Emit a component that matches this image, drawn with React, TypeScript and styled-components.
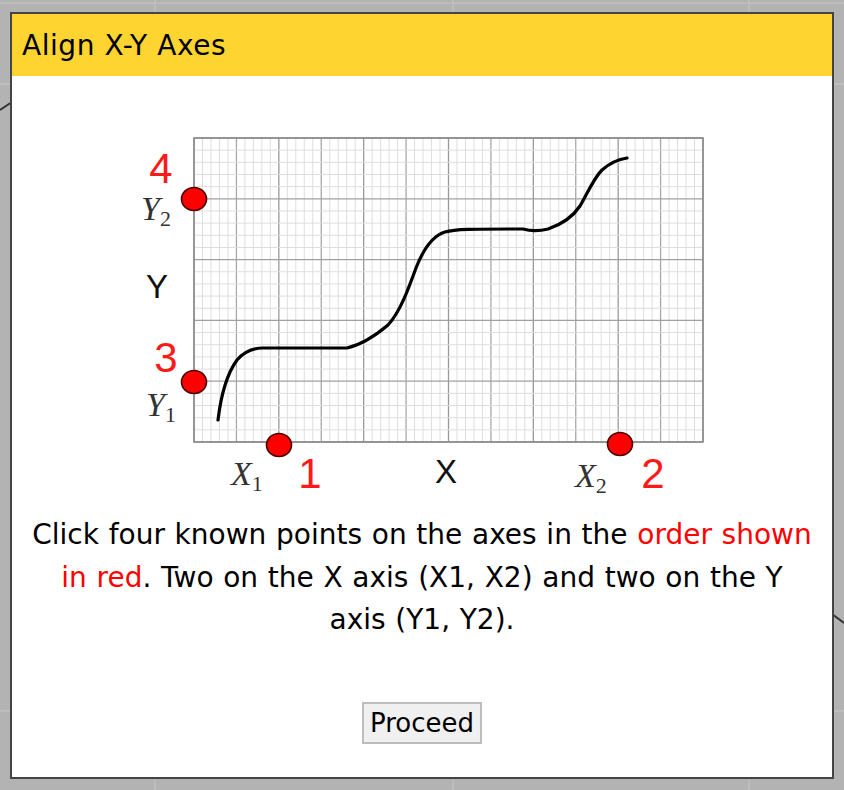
import React from "react";
import styled, { createGlobalStyle } from "styled-components";

const GlobalStyle = createGlobalStyle`
  html, body {
    margin: 0;
    padding: 0;
    background: #b3b3b3;
  }
  body {
    font-family: "DejaVu Sans", Verdana, sans-serif;
    color: #000;
  }
`;

const Canvas = styled.div`
  position: relative;
  width: 844px;
  height: 790px;
  overflow: hidden;
  background: #b3b3b3;
`;

const Backdrop = styled.svg`
  position: absolute;
  top: 0;
  left: 0;
  width: 844px;
  height: 790px;
`;

const Overlay = styled.div`
  position: absolute;
  inset: 0;
  display: flex;
  padding: 12px 10px 11px 10px;
`;

const Dialog = styled.section`
  flex: 1;
  display: flex;
  flex-direction: column;
  background: #fff;
  border: 2px solid #444;
`;

const Header = styled.header`
  height: 62px;
  flex-shrink: 0;
  display: flex;
  align-items: center;
  padding: 0 10px;
  background: #fed530;
  font-size: 28px;
  letter-spacing: 0.55px;
`;

const Body = styled.div`
  flex: 1;
  display: flex;
  flex-direction: column;
  align-items: center;
`;

const Chart = styled.svg`
  display: block;
  margin-top: 54px;
  width: 570px;
  height: 370px;
`;

const Message = styled.p`
  margin: 14px 0 0;
  max-width: 781px;
  text-align: center;
  font-size: 28px;
  line-height: 42.5px;
  word-spacing: 0.8px;
`;

const Red = styled.span`
  color: #ff0000;
`;

const ProceedButton = styled.button`
  margin-top: 60px;
  width: 120px;
  height: 42px;
  padding: 0;
  border: 2px solid #bdbdbd;
  background: #f0f0f0;
  font-family: "DejaVu Sans", Verdana, sans-serif;
  font-size: 26px;
  color: #000;
`;

// chart paper geometry (page coordinates)
const GX = 194;
const GY = 138;
const GW = 509;
const GH = 304;

const GraphPaper = () => {
  const lines: React.ReactNode[] = [];
  for (let i = 0; i <= 60; i++) {
    const x = GX + (GW * i) / 60;
    const major = i % 5 === 0;
    lines.push(
      <line
        key={"v" + i}
        x1={x}
        y1={GY}
        x2={x}
        y2={GY + GH}
        stroke={major ? (i % 10 === 0 ? "#9a9a9a" : "#a8a8a8") : "#dedede"}
        strokeWidth={major ? 1.3 : 1}
      />
    );
  }
  for (let j = 0; j <= 25; j++) {
    const y = GY + (GH * j) / 25;
    const major = j % 5 === 0;
    lines.push(
      <line
        key={"h" + j}
        x1={GX}
        y1={y}
        x2={GX + GW}
        y2={y}
        stroke={major ? "#a0a0a0" : "#dedede"}
        strokeWidth={major ? 1.3 : 1}
      />
    );
  }
  return (
    <g>
      <rect x={GX} y={GY} width={GW} height={GH} fill="#fff" />
      {lines}
      <rect x={GX} y={GY} width={GW} height={GH} fill="none" stroke="#8c8c8c" strokeWidth={1.6} />
    </g>
  );
};

const curve =
  "M218,420 C221,395 226,375 237,360 C244,352 252,348 263,348 L347,348 " +
  "C360,345 375,336 388,325 C400,312 408,290 416,268 C423,250 432,236 445,232 " +
  "C455,229 470,229 523,229 C530,231 540,231 548,229 C560,225 572,218 580,206 " +
  "C588,192 594,178 602,170 C610,163 620,159 627,158";

const dots = [
  [194, 199],
  [194, 382],
  [279, 445],
  [620, 444],
];

const Num = ({ x, y, children }: { x: number; y: number; children: string }) => (
  <text x={x} y={y} textAnchor="middle" fontFamily="'Liberation Sans', Arial, sans-serif" fontSize={42} fill="#ff1a1a">
    {children}
  </text>
);

const AxisName = ({ x, y, children }: { x: number; y: number; children: string }) => (
  <text x={x} y={y} textAnchor="middle" fontFamily="'Liberation Sans', Arial, sans-serif" fontSize={33} fill="#111">
    {children}
  </text>
);

const Sub = ({ x, y, letter, index }: { x: number; y: number; letter: string; index: string }) => (
  <text x={x} y={y} fontFamily="'Liberation Serif', 'Times New Roman', serif" fill="#333">
    <tspan fontStyle="italic" fontSize={34}>
      {letter}
    </tspan>
    <tspan fontSize={22} dy={6}>
      {index}
    </tspan>
  </text>
);

const AxesFigure = () => (
  <Chart viewBox="137 130 570 370">
    <GraphPaper />
    <path d={curve} fill="none" stroke="#000" strokeWidth={3.2} strokeLinecap="round" strokeLinejoin="round" />
    {dots.map(([cx, cy]) => (
      <ellipse key={cx + "-" + cy} cx={cx} cy={cy} rx={12.5} ry={11.5} fill="#ff0000" stroke="#4a0000" strokeWidth={1.6} />
    ))}
    <Num x={161} y={183}>4</Num>
    <Num x={166} y={372}>3</Num>
    <Num x={310} y={488}>1</Num>
    <Num x={653} y={488}>2</Num>
    <AxisName x={157} y={298}>Y</AxisName>
    <AxisName x={446} y={483}>X</AxisName>
    <Sub x={141} y={220} letter="Y" index="2" />
    <Sub x={146} y={416} letter="Y" index="1" />
    <Sub x={231} y={485} letter="X" index="1" />
    <Sub x={575} y={487} letter="X" index="2" />
  </Chart>
);

const BackgroundCanvas = () => (
  <Backdrop viewBox="0 0 844 790">
    <g stroke="#bdbdbd" strokeWidth={2}>
      <line x1={155} y1={0} x2={155} y2={790} />
      <line x1={453} y1={0} x2={453} y2={790} />
      <line x1={749} y1={0} x2={749} y2={790} />
      <line x1={0} y1={3} x2={844} y2={3} />
      <line x1={0} y1={84} x2={844} y2={84} />
      <line x1={0} y1={711} x2={844} y2={711} />
    </g>
    <path d="M0,110 L12,102" stroke="#333" strokeWidth={2} fill="none" />
    <path d="M832,614 L844,623" stroke="#333" strokeWidth={2} fill="none" />
  </Backdrop>
);

export default function App() {
  return (
    <>
      <GlobalStyle />
      <Canvas>
        <BackgroundCanvas />
        <Overlay>
          <Dialog>
            <Header>Align X-Y Axes</Header>
            <Body>
              <AxesFigure />
              <Message>
                Click four known points on the axes in the <Red>order shown in red</Red>. Two on the X axis (X1, X2)
                and two on the Y axis (Y1, Y2).
              </Message>
              <ProceedButton>Proceed</ProceedButton>
            </Body>
          </Dialog>
        </Overlay>
      </Canvas>
    </>
  );
}
